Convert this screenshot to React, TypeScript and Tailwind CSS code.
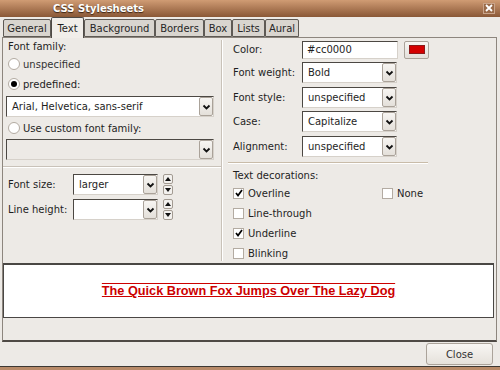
import React from "react";

const Chevron = () => (
  <svg width="9" height="6" viewBox="0 0 9 6">
    <path d="M1.5 1.5 L4.5 4.5 L7.5 1.5" stroke="#111" strokeWidth="1.8" fill="none" />
  </svg>
);

const ArrowBtn = () => (
  <div className="w-[14px] h-[19px] mt-[0px] flex items-center justify-center rounded-[2px] border border-[#aaa299] bg-gradient-to-b from-[#f7f5f2] to-[#e4e0da] shrink-0">
    <Chevron />
  </div>
);

function Combo({ value, w, disabled }: { value?: string; w: string; disabled?: boolean }) {
  return (
    <div
      className={`${w} h-[21px] flex items-center border-t border-l border-[#4c4843] border-b border-b-[#d6d1ca] border-r border-r-[#d6d1ca] ${
        disabled ? "bg-[#edeae6]" : "bg-white"
      } shrink-0`}
    >
      <span className="flex-1 pl-[5px] whitespace-nowrap overflow-hidden">{value}</span>
      <ArrowBtn />
    </div>
  );
}

const Spinner = () => (
  <div className="w-[10px] h-[21px] ml-[5px] flex flex-col gap-[1px] shrink-0">
    <div className="flex-1 flex items-center justify-center rounded-[2px] border border-[#a39b92] bg-[#f3f1ee]">
      <svg width="6" height="4" viewBox="0 0 6 4"><path d="M0 4 L3 0 L6 4 Z" fill="#111" /></svg>
    </div>
    <div className="flex-1 flex items-center justify-center rounded-[2px] border border-[#a39b92] bg-[#f3f1ee]">
      <svg width="6" height="4" viewBox="0 0 6 4"><path d="M0 0 L3 4 L6 0 Z" fill="#111" /></svg>
    </div>
  </div>
);

const Radio = ({ on }: { on?: boolean }) => (
  <div className="w-[12px] h-[12px] rounded-full border border-[#b3aba2] bg-white flex items-center justify-center shrink-0">
    {on && <div className="w-[6px] h-[6px] rounded-full bg-black" />}
  </div>
);

const Check = ({ on }: { on?: boolean }) => (
  <div className="w-[11px] h-[11px] border border-[#b3aba2] bg-white flex items-center justify-center shrink-0">
    {on && (
      <svg width="8" height="8" viewBox="0 0 8 8">
        <path d="M1 4 L3 6.5 L7 1" stroke="#000" strokeWidth="1.7" fill="none" />
      </svg>
    )}
  </div>
);

const tabs: [string, string, boolean][] = [
  ["General", "w-[48px]", false],
  ["Text", "w-[33px]", true],
  ["Background", "w-[71px]", false],
  ["Borders", "w-[49px]", false],
  ["Box", "w-[28px]", false],
  ["Lists", "w-[33px]", false],
  ["Aural", "w-[34px]", false],
];

export default function App() {
  return (
    <div className="w-[500px] h-[370px] flex flex-col bg-[#edeae6] font-['DejaVu_Sans',sans-serif] text-[10px] leading-[13px] text-[#1e1e1e] overflow-hidden">
      {/* Title bar */}
      <div className="h-[17px] flex items-center bg-gradient-to-b from-[#d09c74] to-[#8a5837] shrink-0">
        <span className="pl-[53px] font-bold text-white [text-shadow:0_1px_1px_#3a2212] flex-1">CSS Stylesheets</span>
        <div className="w-[12px] h-[11px] mr-[5px] mt-[-1px] border border-[#c9a48a] bg-[#9a6a48] flex items-center justify-center">
          <svg width="8" height="8" viewBox="0 0 8 8">
            <path d="M1 1 L7 7 M7 1 L1 7" stroke="#fff" strokeWidth="1.8" />
          </svg>
        </div>
      </div>

      <div className="flex-1 flex flex-col px-[2px]">
        {/* Tabs */}
        <div className="h-[20px] flex items-end pl-[1px] shrink-0 relative z-10">
          {tabs.map(([t, w, sel]) =>
            sel ? (
              <div key={t} className={`${w} h-[21px] mb-[-1px] flex items-center justify-center border border-b-0 border-[#4e4a46] rounded-t-[2px] bg-[#f1eeea]`}>
                {t}
              </div>
            ) : (
              <div key={t} className={`${w} h-[18px] flex items-center justify-center border border-[#5e5a55] rounded-t-[2px] bg-[#d9d5cf] text-[#262626]`}>
                {t}
              </div>
            )
          )}
        </div>

        {/* Panel */}
        <div className="w-[495px] h-[305px] border border-[#8d867e] border-b-[#4f4a45] border-b-2 flex flex-col bg-[#edeae6] shrink-0">
          <div className="h-[225px] flex shrink-0">
            {/* Left column */}
            <div className="w-[218px] flex flex-col shrink-0">
              <div className="pt-[2px] pl-[5px] h-[15px]">Font family:</div>
              <div className="h-[20px] flex items-center pl-[5px] gap-[3px] mt-[1px]">
                <Radio />
                <span className="text-[#333]">unspecified</span>
              </div>
              <div className="h-[20px] flex items-center pl-[5px] gap-[3px]">
                <Radio on />
                <span>predefined:</span>
              </div>
              <div className="mt-[2px] pl-[3px]">
                <Combo value="Arial, Helvetica, sans-serif" w="w-[208px]" />
              </div>
              <div className="h-[20px] flex items-center pl-[5px] gap-[3px] mt-[1px]">
                <Radio />
                <span>Use custom font family:</span>
              </div>
              <div className="mt-[1px] pl-[3px]">
                <Combo w="w-[208px]" disabled />
              </div>
              <div className="mt-[6px] h-[1px] bg-[#c9c2b9]" />
              <div className="h-[1px] bg-white" />
              <div className="mt-[6px] h-[21px] flex items-center">
                <span className="w-[70px] pl-[5px]">Font size:</span>
                <Combo value="larger" w="w-[85px]" />
                <Spinner />
              </div>
              <div className="mt-[4px] h-[21px] flex items-center">
                <span className="w-[70px] pl-[5px]">Line height:</span>
                <Combo w="w-[85px]" />
                <Spinner />
              </div>
            </div>

            {/* Vertical separator */}
            <div className="flex py-[2px] shrink-0">
              <div className="w-[1px] bg-[#c9c2b9]" />
              <div className="w-[1px] bg-white" />
            </div>

            {/* Right column */}
            <div className="flex-1 flex flex-col">
              <div className="mt-[2px] h-[19px] flex items-center pl-[10px]">
                <span className="w-[69px]">Color:</span>
                <div className="w-[96px] h-[18px] flex items-center pl-[4px] bg-white border-t border-l border-[#4c4843] border-b border-b-[#d6d1ca] border-r border-r-[#d6d1ca]">
                  #cc0000
                </div>
                <div className="ml-[6px] w-[25px] h-[18px] flex items-center justify-center rounded-[2px] border border-[#aaa299] bg-gradient-to-b from-[#f7f5f2] to-[#e4e0da]">
                  <div className="w-[16px] h-[9px] bg-[#d40000] border border-[#8a1a1a]" />
                </div>
              </div>
              {([
                ["Font weight:", "Bold", "mt-[3px]"],
                ["Font style:", "unspecified", "mt-[4px]"],
                ["Case:", "Capitalize", "mt-[3px]"],
                ["Alignment:", "unspecified", "mt-[4px]"],
              ] as [string, string, string][]).map(([l, v, m]) => (
                <div key={l} className={`${m} h-[21px] flex items-center pl-[10px]`}>
                  <span className="w-[69px]">{l}</span>
                  <Combo value={v} w="w-[95px]" />
                </div>
              ))}
              <div className="mt-[5px] ml-[5px] w-[200px] h-[1px] bg-[#c9bca9]" />
              <div className="ml-[5px] w-[200px] h-[1px] bg-white" />
              <div className="mt-[5px] h-[13px] pl-[10px]">Text decorations:</div>
              <div className="mt-[1px] grid grid-cols-[149px_1fr] pl-[10px]">
                <div className="h-[20px] flex items-center gap-[4px]">
                  <Check on />
                  <span>Overline</span>
                </div>
                <div className="h-[20px] flex items-center gap-[4px]">
                  <Check />
                  <span>None</span>
                </div>
                <div className="h-[20px] flex items-center gap-[4px]">
                  <Check />
                  <span>Line-through</span>
                </div>
                <div />
                <div className="h-[20px] flex items-center gap-[4px]">
                  <Check on />
                  <span>Underline</span>
                </div>
                <div />
                <div className="h-[20px] flex items-center gap-[4px]">
                  <Check />
                  <span>Blinking</span>
                </div>
                <div />
              </div>
            </div>
          </div>

          {/* Preview */}
          <div className="w-[491px] h-[55px] border border-[#4a4744] border-t-2 bg-white flex items-center justify-center shrink-0">
            <span className="font-['Liberation_Sans',Arial,sans-serif] font-bold text-[12.7px] leading-[14px] text-[#cc0000] [text-decoration-line:underline_overline]">
              The Quick Brown Fox Jumps Over The Lazy Dog
            </span>
          </div>
        </div>

        {/* Button row */}
        <div className="flex justify-end pt-[1px] pr-[5px]">
          <div className="w-[67px] h-[22px] flex items-center justify-center rounded-[3px] border border-[#aba39a] bg-gradient-to-b from-[#f8f6f3] to-[#e5e1db] text-[#333]">
            Close
          </div>
        </div>
      </div>

      {/* Bottom frame */}
      <div className="h-[1px] bg-[#3d3833] shrink-0" />
      <div className="h-[3px] bg-[#b88a68] shrink-0" />
    </div>
  );
}
